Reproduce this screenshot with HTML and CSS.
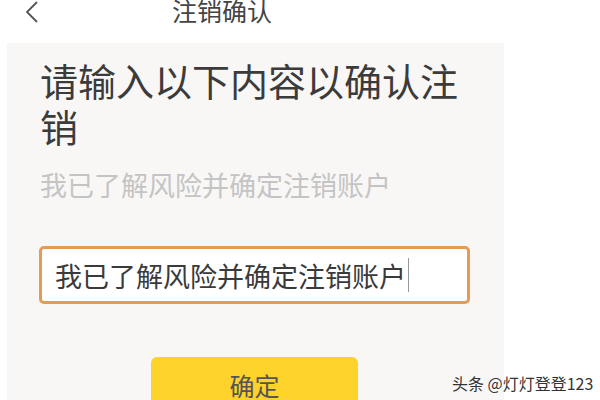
FILE: index.html
```html
<!DOCTYPE html>
<html lang="zh-CN">
<head>
    <meta charset="UTF-8">
    <meta name="viewport" content="width=device-width, initial-scale=1.0">
    <title>注销确认</title>
    <link rel="stylesheet" href="styles.css">
</head>
<body>
    <div class="topbar">
        <span class="back">
            <svg width="14" height="22" viewBox="0 0 14 22"><path d="M12 1 L2 11 L12 21" fill="none" stroke="#555" stroke-width="1.8"/></svg>
        </span>
        <div class="title">注销确认</div>
    </div>

    <div class="panel">
        <h1 class="heading">请输入以下内容以确认注销</h1>
        <p class="hint">我已了解风险并确定注销账户</p>

        <div class="input-box">
            <span class="input-text">我已了解风险并确定注销账户</span><span class="caret"></span>
        </div>

        <div class="btn-wrap">
            <button class="btn-confirm">确定</button>
        </div>
    </div>

    <div class="watermark">头条 @灯灯登登123</div>
</body>
</html>
```

FILE: styles.css
```css
body {
    margin: 0;
    background-color: #fff;
    font-family: "Noto Sans CJK SC", "Noto Sans", sans-serif;
    width: 600px;
    height: 400px;
    overflow: hidden;
    position: relative;
}

.topbar {
    height: 43px;
    position: relative;
}

.back {
    position: absolute;
    left: 25px;
    top: 1px;
}

.title {
    position: absolute;
    left: 172px;
    top: -7px;
    font-size: 25px;
    line-height: 34px;
    color: #444;
}

.panel {
    margin-left: 7px;
    width: 464px;
    height: 357px;
    padding: 14px 0 0 33px;
    background-color: #f8f7f6;
}

.heading {
    margin: 0;
    width: 430px;
    font-size: 38px;
    line-height: 46px;
    font-weight: normal;
    color: #3b3b3b;
}

.hint {
    margin: 19px 0 0;
    font-size: 27px;
    line-height: 34px;
    color: #c4c4c4;
}

.input-box {
    margin: 44px 0 0 -1px;
    width: 412px;
    height: 52px;
    padding-left: 13px;
    background-color: #fff;
    border: 3px solid #e29c55;
    border-radius: 5px;
    display: flex;
    align-items: center;
}

.input-text {
    font-size: 27px;
    color: #3a3a3a;
}

.caret {
    width: 1px;
    height: 34px;
    background-color: #999;
    margin-left: 2px;
}

.btn-wrap {
    margin-top: 53px;
    padding-left: 111px;
}

.btn-confirm {
    width: 207px;
    height: 60px;
    border: none;
    border-radius: 6px;
    background-color: #fdd22b;
    color: #555;
    font-family: inherit;
    font-size: 25px;
    padding: 0 0 4px;
}

.watermark {
    position: absolute;
    left: 452px;
    top: 371px;
    white-space: nowrap;
    font-size: 16px;
    color: #333;
    text-shadow: 0 0 2px #fff;
}
```
